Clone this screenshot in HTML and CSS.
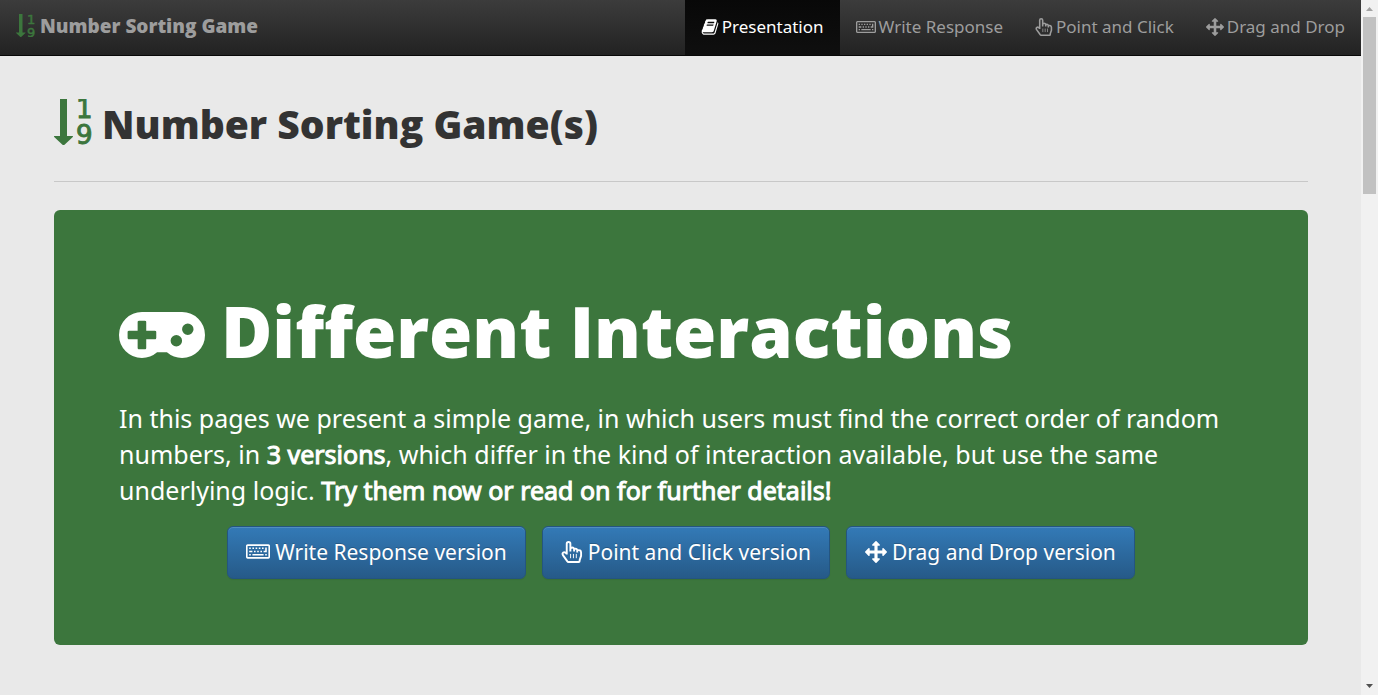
FILE: index.html
```html
<!DOCTYPE html>
<html lang="en">
<head>
<meta charset="utf-8">
<title>Number Sorting Game</title>
<link rel="stylesheet" href="styles.css">
</head>
<body>
<svg class="sprite" aria-hidden="true">
  <symbol id="sort" viewBox="0 0 38 46">
    <path d="M6 0h7v37h5.500q1 0 .3 1l-8 7.500q-1.300 1-2.600 0l-8-7.500q-.7-1 .3-1H6z"/>
    <text class="digit" x="22" y="19">1</text>
    <text class="digit" x="22" y="45">9</text>
  </symbol>
  <symbol id="book" viewBox="0 0 1792 1792"><path d="M1703 478q40 57 18 129l-275 906q-19 64-76.500 107.500t-122.500 43.500h-923q-77 0-148.500-53.500t-99.500-131.500q-24-67-2-127 0-4 3-27t4-37q1-8-3-21.500t-3-19.500q2-11 8-21t16.500-23.500 16.500-23.500q23-38 45-91.500t30-91.500q3-10 .5-30t-.5-28q3-11 17-28t17-23q21-36 42-92t25-90q1-9-2.500-32t.5-28q4-13 22-30.500t22-22.500q19-26 42.500-84.500t27.500-96.500q1-8-3-25.500t-2-26.500q2-8 9-18t18-23 17-21q8-12 16.500-30.500t15-35 16-36 19.500-32 26.500-23.500 36-11.500 47.500 5.500l-1 3q38-9 51-9h761q74 0 114 56t18 130l-274 906q-36 119-71.500 153.500t-128.500 34.500h-869q-27 0-38 15-11 16-1 43 24 70 144 70h923q29 0 56-15.500t35-41.500l300-987q7-22 5-57 38 15 59 43zm-1064 2q-4 13 2 22.500t20 9.500h608q13 0 25.500-9.500t16.500-22.500l21-64q4-13-2-22.500t-20-9.500h-608q-13 0-25.500 9.500t-16.500 22.500zm-83 256q-4 13 2 22.500t20 9.500h608q13 0 25.500-9.500t16.500-22.500l21-64q4-13-2-22.500t-20-9.500h-608q-13 0-25.500 9.500t-16.500 22.500z"/></symbol>
  <symbol id="keyboard" viewBox="0 384 1920 1152"><path d="M1792 1408v-896h-1664v896zm128-896v896q0 53-37.500 90.500t-90.500 37.500h-1664q-53 0-90.500-37.500t-37.500-90.500v-896q0-53 37.500-90.500t90.500-37.500h1664q53 0 90.500 37.500t37.500 90.500zM256 640h128v128h-128zM512 640h128v128h-128zM768 640h128v128h-128zM1024 640h128v128h-128zM1280 640h128v128h-128zM256 896h256v128h-256zM640 896h128v128h-128zM896 896h128v128h-128zM1152 896h128v128h-128zM1536 640h128v384h-256v-128h128zM256 1152h128v128h-128zM512 1152h896v128h-896zM1536 1152h128v128h-128z"/></symbol>
  <symbol id="hand" viewBox="0 0 22 23"><path class="line" d="M5.500 14V3q0-2 1.900-2t1.900 2v5q.3-1.200 1.900-1.200t2 1.500q3-.6 3.300 1.400 3.800-.8 4 2.300v3.500l-1.500 4.500v1q0 1-1 1H7.500q-1 0-1.700-1.200L1.500 14.800q-1-1.800.4-2.800 1.600-1 3.600 1.500M9.300 8v3M13.200 8.500V11M16.500 9.800V12"/><path class="thin" d="M9.500 13.500v4.500M12.500 13.500v4.500M15.500 13.500v4.500"/></symbol>
  <symbol id="arrows" viewBox="0 0 1792 1792"><path d="M1792 896q0 26-19 45l-256 256q-19 19-45 19t-45-19-19-45v-128h-384v384h128q26 0 45 19t19 45-19 45l-256 256q-19 19-45 19t-45-19l-256-256q-19-19-19-45t19-45 45-19h128v-384h-384v128q0 26-19 45t-45 19-45-19l-256-256q-19-19-19-45t19-45l256-256q19-19 45-19t45 19 19 45v128h384v-384h-128q-26 0-45-19t-19-45 19-45l256-256q19-19 45-19t45 19l256 256q19 19 19 45t-19 45-45 19h-128v384h384v-128q0-26 19-45t45-19 45 19l256 256q19 19 19 45z"/></symbol>
  <symbol id="gamepad" viewBox="0 512 1920 1024"><path d="M832 1088v-128q0-14-9-23t-23-9h-192v-192q0-14-9-23t-23-9h-128q-14 0-23 9t-9 23v192h-192q-14 0-23 9t-9 23v128q0 14 9 23t23 9h192v192q0 14 9 23t23 9h128q14 0 23-9t9-23v-192h192q14 0 23-9t9-23zm576 64q0-53-37.500-90.500t-90.500-37.500-90.500 37.500-37.500 90.500 37.500 90.500 90.500 37.500 90.500-37.500 37.500-90.500zm256-256q0-53-37.500-90.500t-90.500-37.500-90.500 37.500-37.500 90.500 37.500 90.500 90.500 37.500 90.500-37.500 37.500-90.500zm256 128q0 212-150 362t-362 150q-192 0-338-128h-220q-146 128-338 128-212 0-362-150t-150-362 150-362 362-150h896q212 0 362 150t150 362z"/></symbol>
</svg>
<div class="page">
  <nav class="navbar">
    <a class="brand" href="#"><svg class="icon brand-icon"><use href="#sort"/></svg>Number Sorting Game</a>
    <ul class="menu">
      <li><a class="menu-link active" href="#presentation"><svg class="icon square"><use href="#book"/></svg>Presentation</a></li>
      <li><a class="menu-link" href="#write"><svg class="icon wide"><use href="#keyboard"/></svg>Write Response</a></li>
      <li><a class="menu-link" href="#point"><svg class="icon square"><use href="#hand"/></svg>Point and Click</a></li>
      <li><a class="menu-link" href="#drag"><svg class="icon square"><use href="#arrows"/></svg>Drag and Drop</a></li>
    </ul>
  </nav>
  <main class="content">
    <header class="page-header">
      <h1 class="page-title"><svg class="icon title-icon"><use href="#sort"/></svg>Number Sorting Game(s)</h1>
    </header>
    <section class="hero">
      <h2 class="hero-title"><svg class="icon hero-icon"><use href="#gamepad"/></svg>Different Interactions</h2>
      <p class="lead">In this pages we present a simple game, in which users must find the correct order of random numbers, in <strong>3 versions</strong>, which differ in the kind of interaction available, but use the same underlying logic. <strong>Try them now or read on for further details!</strong></p>
      <div class="actions">
        <a class="btn" href="#write"><svg class="icon wide"><use href="#keyboard"/></svg>Write Response version</a>
        <a class="btn" href="#point"><svg class="icon square"><use href="#hand"/></svg>Point and Click version</a>
        <a class="btn" href="#drag"><svg class="icon square"><use href="#arrows"/></svg>Drag and Drop version</a>
      </div>
    </section>
  </main>
</div>
<div class="scrollbar" aria-hidden="true">
  <svg class="scroll-arrow up" viewBox="0 0 17 17"><path d="M5 11l3.500-4 3.500 4z"/></svg>
  <div class="thumb"></div>
  <svg class="scroll-arrow down" viewBox="0 0 17 17"><path d="M5 6l3.500 4L12 6z"/></svg>
</div>
</body>
</html>
```
FILE: styles.css
```css
* { box-sizing: border-box; }
body {
  margin: 0;
  height: 100vh;
  overflow: hidden;
  display: grid;
  grid-template-columns: 1fr 17px;
  background: #e9e9e9;
  color: #333;
  font-family: "Noto Sans", "Open Sans", sans-serif;
}
.sprite { position: absolute; width: 0; height: 0; }
.icon { flex: none; fill: currentColor; }
.digit { font: 26px "DejaVu Sans", sans-serif; stroke: currentColor; stroke-width: 1; }
.line { fill: none; stroke: currentColor; stroke-width: 2; stroke-linejoin: round; }
.thin { fill: none; stroke: currentColor; stroke-width: 1; }
.page { min-width: 0; overflow: hidden; }
.brand, .page-title, .hero-title {
  font-family: "Open Sans", sans-serif;
  font-weight: 800;
}

.navbar {
  display: flex;
  justify-content: space-between;
  height: 56px;
  border-bottom: 1px solid #080808;
  background: linear-gradient(#3c3c3c, #222);
}
.brand {
  display: flex;
  align-items: center;
  gap: 5px;
  padding: 0 16px 4px;
  color: #9d9d9d;
  font-size: 19px;
  text-decoration: none;
}
.brand-icon { width: 19px; height: 23px; color: #3c763d; }
.menu { display: flex; margin: 0; padding: 0; list-style: none; }
.menu-link {
  display: flex;
  align-items: center;
  gap: 3px;
  height: 55px;
  padding: 0 16px 2px;
  color: #9d9d9d;
  font-size: 17px;
  text-decoration: none;
  white-space: nowrap;
}
.menu-link.active { color: #fff; background: linear-gradient(#080808, #0f0f0f); }
.menu-link .square { width: 18px; height: 18px; }
.menu-link .wide { width: 20px; height: 12px; }

.content { padding: 42px 53px 48px 54px; }
.page-header {
  margin-bottom: 28px;
  padding-bottom: 32px;
  border-bottom: 1px solid #c8c8c8;
}
.page-title {
  display: flex;
  align-items: center;
  gap: 10px;
  margin: 0;
  font-size: 39px;
  line-height: 51px;
}
.title-icon { width: 38px; height: 46px; margin-bottom: 4px; color: #3c763d; }

.hero {
  padding: 76px 65px 66px;
  border-radius: 6px;
  background: #3c763d;
  color: #fff;
}
.hero-title {
  display: flex;
  align-items: center;
  gap: 16px;
  margin: 0 0 24px;
  font-size: 70px;
  line-height: 90px;
}
.hero-icon { width: 86px; height: 46px; margin-top: 8px; }
.lead { margin: 0 0 18px; font-size: 25px; line-height: 36px; }
.lead strong { font-weight: 400; -webkit-text-stroke: 1px currentColor; }
.actions { display: flex; justify-content: center; flex-wrap: wrap; gap: 16px; }
.btn {
  display: flex;
  align-items: center;
  gap: 5px;
  height: 53px;
  padding: 0 18px 2px;
  border: 1px solid #245580;
  border-radius: 6px;
  background: linear-gradient(#337ab7, #265a88);
  box-shadow: inset 0 1px 0 rgba(255, 255, 255, .15), 0 1px 1px rgba(0, 0, 0, .075);
  color: #fff;
  font-size: 21px;
  text-decoration: none;
  text-shadow: 0 -1px 0 rgba(0, 0, 0, .2);
}
.btn .square { width: 22px; height: 22px; }
.btn .wide { width: 24px; height: 15px; }

.scrollbar { display: flex; flex-direction: column; align-items: center; background: #f1f1f1; }
.scroll-arrow { width: 17px; height: 17px; }
.up { fill: #a3a3a3; }
.down { margin-top: auto; fill: #505050; }
.thumb { width: 13px; height: 177px; background: #c1c1c1; }
```
